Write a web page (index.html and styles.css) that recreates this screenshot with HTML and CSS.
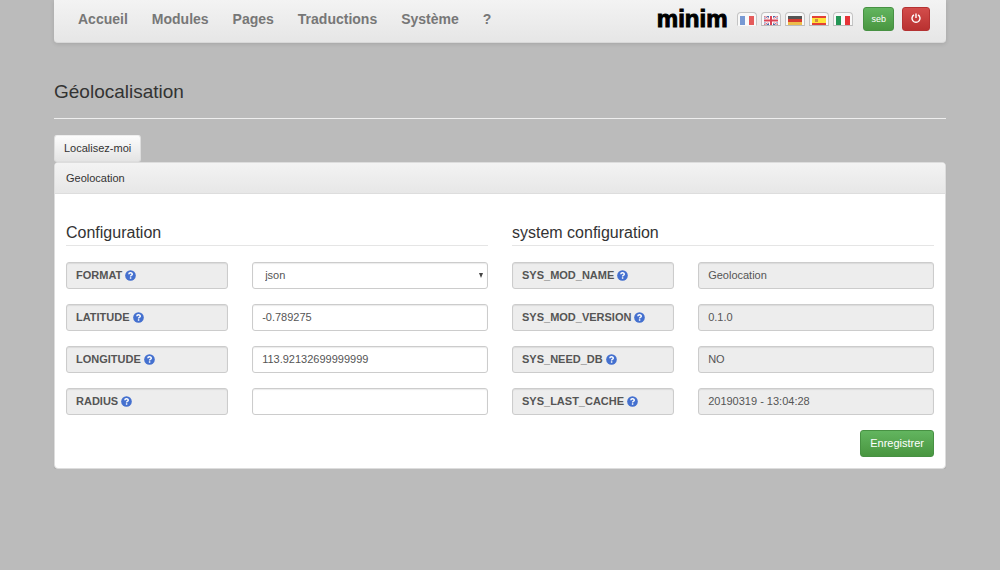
FILE: index.html
```html
<!DOCTYPE html>
<html lang="fr">
<head>
<meta charset="utf-8">
<meta name="viewport" content="width=device-width, initial-scale=1">
<title>Géolocalisation</title>
<link rel="stylesheet" href="styles.css">
</head>
<body>
<svg class="sprites" aria-hidden="true">
  <symbol id="help" viewBox="0 0 12 12">
    <circle cx="6" cy="6" r="5.8" fill="#4470cf"/>
    <path d="M4.2 4.7C4.2 2.5 7.9 2.5 7.9 4.5C7.9 5.8 6.1 5.7 6.1 7.1M6.1 8V9.5" fill="none" stroke="#fff" stroke-width="1.6"/>
  </symbol>
</svg>
<div class="container">
  <header class="navbar">
    <nav class="menu">
      <a href="#">Accueil</a>
      <a href="#">Modules</a>
      <a href="#">Pages</a>
      <a href="#">Traductions</a>
      <a href="#">Système</a>
      <a href="#">?</a>
    </nav>
    <div class="tools">
      <a class="brand" href="#">minim</a>
      <div class="flags">
        <a class="flag active" href="#" aria-label="Français"><svg viewBox="0 0 14 9"><path fill="#fafafa" d="M0 0h14v9H0z"/><path fill="#7899d3" d="M0 0h5v9H0z"/><path fill="#e45b5b" d="M9 0h5v9H9z"/></svg></a>
        <a class="flag" href="#" aria-label="English"><svg viewBox="0 0 14 9"><path fill="#4b67a8" d="M0 0h14v9H0z"/><path stroke="#fff" stroke-width="2" d="M0 0l14 9M14 0L0 9"/><path stroke="#d86070" stroke-width="1" d="M0 0l14 9M14 0L0 9"/><path stroke="#fff" stroke-width="4" d="M7 0v9M0 4.5h14"/><path stroke="#d94455" stroke-width="2" d="M7 0v9M0 4.5h14"/></svg></a>
        <a class="flag" href="#" aria-label="Deutsch"><svg viewBox="0 0 14 9"><path fill="#555" d="M0 0h14v3H0z"/><path fill="#d63b30" d="M0 3h14v3H0z"/><path fill="#edbd4b" d="M0 6h14v3H0z"/></svg></a>
        <a class="flag" href="#" aria-label="Español"><svg viewBox="0 0 14 9"><path fill="#e34136" d="M0 0h14v9H0z"/><path fill="#ffe438" d="M0 2h14v5H0z"/><path fill="#d18b42" d="M3 3h3v3H3z"/></svg></a>
        <a class="flag" href="#" aria-label="Italiano"><svg viewBox="0 0 14 9"><path fill="#fafafa" d="M0 0h14v9H0z"/><path fill="#249656" d="M0 0h5v9H0z"/><path fill="#e63438" d="M9 0h5v9H9z"/></svg></a>
      </div>
      <button class="btn small success" type="button">seb</button>
      <button class="btn small danger" type="button" aria-label="Déconnexion"><svg class="power" viewBox="0 0 10 10"><path d="M3 1.8A4 4 0 1 0 7 1.8M5 0.4V5" fill="none" stroke="#fff" stroke-width="1.4"/></svg></button>
    </div>
  </header>

  <h1>Géolocalisation</h1>
  <button class="btn default" type="button">Localisez-moi</button>

  <form class="panel">
    <div class="panel-heading">Geolocation</div>
    <div class="panel-body">
      <div class="columns">
        <section>
          <h2>Configuration</h2>
          <div class="fields">
            <label for="format">FORMAT <svg class="help"><use href="#help"/></svg></label>
            <div class="select"><select id="format"><option>json</option></select></div>
            <label for="latitude">LATITUDE <svg class="help"><use href="#help"/></svg></label>
            <input id="latitude" type="text" value="-0.789275">
            <label for="longitude">LONGITUDE <svg class="help"><use href="#help"/></svg></label>
            <input id="longitude" type="text" value="113.92132699999999">
            <label for="radius">RADIUS <svg class="help"><use href="#help"/></svg></label>
            <input id="radius" type="text">
          </div>
        </section>
        <section>
          <h2>system configuration</h2>
          <div class="fields">
            <label for="name">SYS_MOD_NAME <svg class="help"><use href="#help"/></svg></label>
            <input id="name" type="text" value="Geolocation" readonly>
            <label for="version">SYS_MOD_VERSION <svg class="help"><use href="#help"/></svg></label>
            <input id="version" type="text" value="0.1.0" readonly>
            <label for="db">SYS_NEED_DB <svg class="help"><use href="#help"/></svg></label>
            <input id="db" type="text" value="NO" readonly>
            <label for="cache">SYS_LAST_CACHE <svg class="help"><use href="#help"/></svg></label>
            <input id="cache" type="text" value="20190319 - 13:04:28" readonly>
          </div>
        </section>
      </div>
      <div class="actions"><button class="btn success" type="button">Enregistrer</button></div>
    </div>
  </form>
</div>
</body>
</html>
```

FILE: styles.css
```css
* { box-sizing: border-box; }
body {
  margin: 0;
  background: #bbb;
  color: #333;
  font: 11px/16px "Liberation Sans", Arial, sans-serif;
}
button, input, select { font: inherit; }
svg { display: block; }
.sprites { position: absolute; width: 0; height: 0; }
.container { margin: 0 54px; }

.navbar {
  display: flex;
  justify-content: space-between;
  align-items: center;
  padding: 7px 16px 11px 24px;
  border-bottom: 1px solid #d8d8d8;
  border-radius: 0 0 4px 4px;
  background: linear-gradient(#f3f3f3, #e6e6e6);
  box-shadow: 0 1px 4px rgba(0, 0, 0, .12);
}
.menu { display: flex; gap: 24px; }
.menu a { color: #777; font-size: 14px; font-weight: bold; text-decoration: none; }
.tools { display: flex; align-items: center; gap: 8px; }
.brand {
  margin-right: 2px;
  color: #000;
  font-size: 24px;
  line-height: 24px;
  font-weight: bold;
  text-decoration: none;
  -webkit-text-stroke: 1px #000;
}
.flags { display: flex; gap: 4px; padding-right: 2px; }
.flag {
  display: block;
  width: 20px;
  height: 14px;
  padding: 3px 2px 0;
  border: 1px solid #c4c4c4;
  border-bottom-color: #bbb;
  border-radius: 4px 4px 0 0;
  background: #f8f8f8;
}
.flag.active { border-bottom-color: transparent; }
.flag svg { width: 14px; height: 9px; }

h1 {
  margin: 37px 0 16px;
  padding-bottom: 14px;
  border-bottom: 1px solid #eee;
  font-size: 19px;
  line-height: 24px;
  font-weight: normal;
}
.btn {
  display: block;
  padding: 5px 9px;
  border: 1px solid;
  border-radius: 3px;
  line-height: 15px;
}
.default {
  border-color: #eee #ddd #ddd;
  background: linear-gradient(#fcfcfc, #e4e4e4);
  color: #333;
}
.success { border-color: #479143; background: linear-gradient(#62b55f, #499640); color: #fff; }
.danger { border-color: #b43232; background: linear-gradient(#d34d4b, #b93130); color: #fff; }
.small { padding: 4px 8px; font-size: 9px; line-height: 14px; }
.small.success { padding: 4px 7px; }
.power { width: 10px; height: 10px; margin: 1px 0 3px; }

.panel {
  border: 1px solid #ddd;
  border-radius: 4px;
  background: #fff;
  box-shadow: 0 1px 1px rgba(0, 0, 0, .1);
}
.panel-heading {
  padding: 7px 11px;
  border-bottom: 1px solid #ddd;
  border-radius: 3px 3px 0 0;
  background: linear-gradient(#f3f3f3, #e7e7e7);
}
.panel-body { padding: 29px 11px 11px; }
.columns { display: grid; grid-template-columns: 1fr 1fr; gap: 24px; }
h2 {
  margin: 0 0 16px;
  padding-bottom: 2px;
  border-bottom: 1px solid #e5e5e5;
  font-size: 16px;
  line-height: 20px;
  font-weight: normal;
}
.fields {
  display: grid;
  grid-template-columns: minmax(0, 11fr) minmax(0, 16fr);
  gap: 15px 24px;
}
.fields label, .fields input, .select {
  width: 100%;
  height: 27px;
  border: 1px solid #ccc;
  border-radius: 3px;
  background: #fff;
  box-shadow: inset 0 1px 1px rgba(0, 0, 0, .08);
  color: #555;
}
.fields label {
  display: flex;
  align-items: center;
  gap: 3px;
  padding: 0 9px 1px;
  background: #ededed;
  font-weight: bold;
}
.fields input { padding: 0 9px 1px; }
.fields input[readonly] { background: #ededed; }
.help { width: 11px; height: 11px; }
.select { display: flex; align-items: center; padding: 0 4px 1px 0; }
.select::after {
  content: "";
  border: solid transparent;
  border-width: 5px 2px 0;
  border-top-color: #444;
}
.select select {
  flex: 1;
  height: 100%;
  padding: 0 12px;
  border: 0;
  background: transparent;
  color: #555;
  appearance: none;
}
.actions { display: flex; justify-content: flex-end; margin-top: 15px; }
```
